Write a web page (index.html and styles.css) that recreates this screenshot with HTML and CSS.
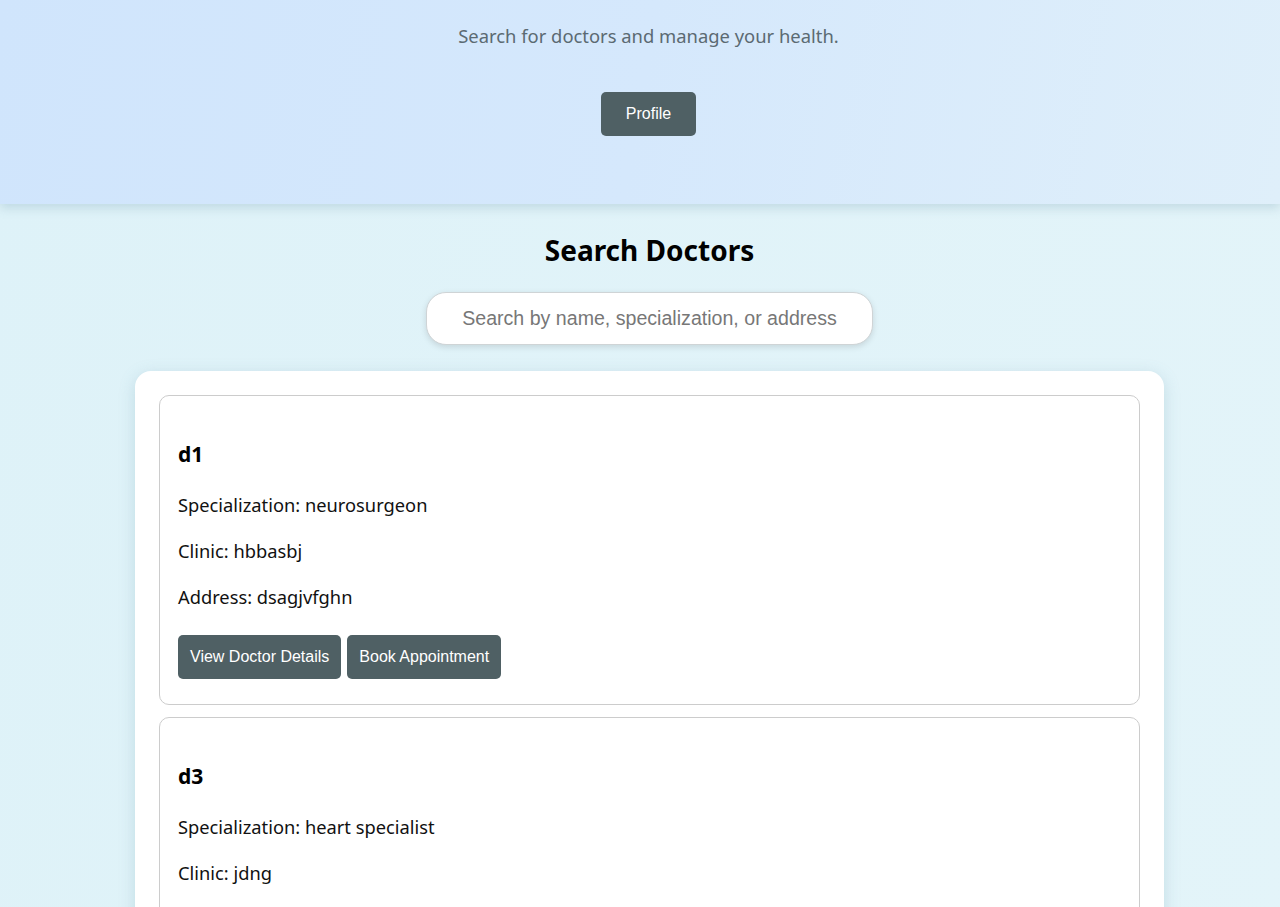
FILE: index.html
```html
<!DOCTYPE html>
<html>
<head>
<meta charset="utf-8">
<link rel="stylesheet" href="styles.css">
</head>
<body>
<header class="hero">
  <p class="subtitle">Search for doctors and manage your health.</p>
  <button class="btn btn-profile">Profile</button>
</header>
<main class="main">
  <h2 class="title">Search Doctors</h2>
  <input class="search" type="text" placeholder="Search by name, specialization, or address">
  <section class="list">
    <article class="card">
      <h3>d1</h3>
      <p>Specialization: neurosurgeon</p>
      <p>Clinic: hbbasbj</p>
      <p>Address: dsagjvfghn</p>
      <div class="actions">
        <button class="btn">View Doctor Details</button>
        <button class="btn">Book Appointment</button>
      </div>
    </article>
    <article class="card">
      <h3>d3</h3>
      <p>Specialization: heart specialist</p>
      <p>Clinic: jdng</p>
    </article>
  </section>
</main>
</body>
</html>
```
FILE: styles.css
```css
html, body {
  margin: 0;
  padding: 0;
}
body {
  font-family: "Noto Sans", "Open Sans", sans-serif;
  background: linear-gradient(100deg, #def2f8 0%, #e3f4f9 100%);
  color: #111;
  min-height: 907px;
  overflow: hidden;
}
.hero {
  background: linear-gradient(100deg, #d0e5fc 0%, #d5e8fc 50%, #dfeffa 100%);
  height: 204px;
  box-sizing: border-box;
  display: flex;
  flex-direction: column;
  align-items: center;
  padding-top: 22px;
  padding-left: 17px;
  box-shadow: 0 4px 10px rgba(120, 160, 180, 0.3);
  position: relative;
}
.subtitle {
  margin: 0;
  font-size: 18.4px;
  line-height: 28px;
  color: #5b6a72;
}
.btn {
  font-family: "Liberation Sans", Arial, sans-serif;
  font-size: 16px;
  color: #fff;
  background: #4f6064;
  border: none;
  border-radius: 5px;
  padding: 0 12px;
  height: 44px;
  cursor: pointer;
}
.btn-profile {
  margin-top: 42px;
  padding: 0 24px;
  width: 95px;
}
.main {
  display: flex;
  flex-direction: column;
  align-items: center;
  padding-top: 26px;
  padding-left: 19px;
}
.title {
  margin: 0;
  font-size: 28px;
  line-height: 40px;
  font-weight: 700;
  color: #000;
}
.search {
  margin-top: 22px;
  width: 447px;
  height: 53px;
  box-sizing: border-box;
  border: 1px solid #cfd4d6;
  border-radius: 20px;
  background: #fff;
  font-family: "Liberation Sans", Arial, sans-serif;
  font-size: 19.6px;
  text-align: center;
  color: #333;
  box-shadow: 0 2px 6px rgba(0, 0, 0, 0.12);
  outline: none;
}
.search::placeholder {
  color: #777;
}
.list {
  margin-top: 26px;
  width: 1029px;
  box-sizing: border-box;
  background: #fff;
  border-radius: 16px;
  padding: 24px;
  box-shadow: 0 4px 16px rgba(100, 150, 170, 0.25);
  display: flex;
  flex-direction: column;
  gap: 12px;
}
.card {
  border: 1px solid #ccc;
  border-radius: 10px;
  padding: 23px 18px 25px;
  min-height: 309px;
  box-sizing: border-box;
}
.card h3 {
  margin: 20px 0 22px;
  font-size: 21px;
  line-height: 30px;
  font-weight: 700;
  color: #000;
}
.card p {
  margin: 0 0 18px;
  font-size: 18.3px;
  line-height: 28px;
  color: #111;
}
.actions {
  display: flex;
  gap: 6px;
  margin-top: 24px;
}
```
